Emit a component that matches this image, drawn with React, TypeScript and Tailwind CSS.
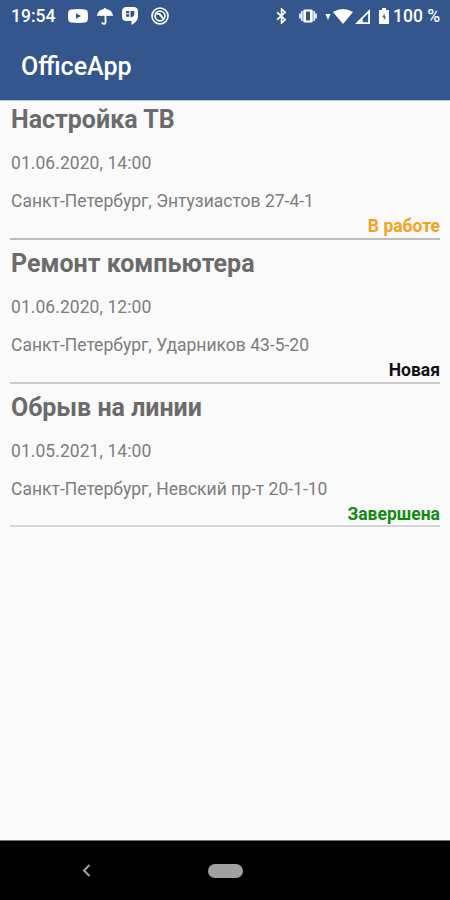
type Task = {
  title: string;
  date: string;
  address: string;
  status: string;
  statusClass: string;
  lineClass: string;
};

const tasks: Task[] = [
  {
    title: "Настройка ТВ",
    date: "01.06.2020, 14:00",
    address: "Санкт-Петербург, Энтузиастов 27-4-1",
    status: "В работе",
    statusClass: "text-[#f5a11a]",
    lineClass: "border-[#bdbdbd]",
  },
  {
    title: "Ремонт компьютера",
    date: "01.06.2020, 12:00",
    address: "Санкт-Петербург, Ударников 43-5-20",
    status: "Новая",
    statusClass: "text-[#111111]",
    lineClass: "border-[#cacaca]",
  },
  {
    title: "Обрыв на линии",
    date: "01.05.2021, 14:00",
    address: "Санкт-Петербург, Невский пр-т 20-1-10",
    status: "Завершена",
    statusClass: "text-[#138a13]",
    lineClass: "border-[#d6d6d6]",
  },
];

function StatusBar() {
  return (
    <div className="flex h-8 items-center pl-[11px] pr-[10px] text-[17.500px] leading-8 font-medium">
      <span className="w-[57px] whitespace-nowrap">19:54</span>
      <svg className="h-[14px] w-5" viewBox="0 0 20 14">
        <path fill="currentColor" fillRule="evenodd" d="M3 .4Q10-.3 17 .4 19.6.6 19.7 3q.5 4 0 8-.2 2.300-2.700 2.600-7 .7-14 0Q.5 13.400.3 11q-.5-4 0-8Q.5.6 3 .4ZM8 4.200v5.600L13 7Z" />
      </svg>
      <svg className="ml-[9px] h-[17px] w-4" viewBox="0 0 16 17">
        <path fill="currentColor" d="M0 8C.3 3.900 3.300 1.400 7.200 1V0h1.600v1c3.900.4 6.900 2.900 7.200 7-2-.5-3.300-.5-4.700 0-.7-.1-1.400-.2-1.900-.2v6.400c0 3.400-5.100 3.400-5.100.1h1.800c0 1.100 1.500 1.100 1.500-.1V7.800c-1 0-1.800 0-2.900.2C3.300 7.500 2 7.500 0 8Z" />
      </svg>
      <svg className="ml-[9px] h-[18px] w-4" viewBox="0 0 16 18">
        <path fill="currentColor" fillRule="evenodd" d="M4.500 0h7Q16 0 16 4.500v4.500q0 5.500-6.500 9v-4H4.500Q0 14 0 9.500v-5Q0 0 4.500 0ZM4 4v5.800h3.200V4Zm4.500 0v6.200c3 0 3.800-1.500 3.800-3.400V4Z" />
        <path stroke="currentColor" strokeWidth="1" d="M4 6.800h3.200" />
      </svg>
      <svg className="ml-[13px] h-[18px] w-[18px]" viewBox="0 0 18 18" fill="none" stroke="currentColor">
        <circle cx="9" cy="9" r="8" strokeWidth="1.600" />
        <circle cx="9" cy="9" r="4.900" strokeWidth="1.700" />
        <path strokeWidth="2" d="m5.500 6.800 3 .2 4 5" />
      </svg>

      <div className="ml-auto flex items-center">
        <svg className="h-[16px] w-[11px]" viewBox="0 0 11 16" fill="none" stroke="currentColor" strokeWidth="1.700">
          <path d="m1.200 4.300 7.900 7.400L5.600 15V1l3.500 3.300-7.900 7.400" />
        </svg>
        <svg className="ml-[12px] h-[14px] w-[18px]" viewBox="0 0 18 14">
          <path fill="currentColor" fillRule="evenodd" d="M5.500.5h7q1.200 0 1.200 1.200v10.600q0 1.200-1.200 1.200h-7q-1.200 0-1.200-1.200V1.700Q4.300.5 5.500.5ZM7 2.500v9h4v-9Z" />
          <path fill="currentColor" d="M3.800 2v10H2V9.500H0v-5h2V2ZM14.200 2v10H16V9.500h2v-5h-2V2Z" opacity=".85" />
        </svg>
        <svg className="mt-[2px] ml-[8px] h-[6px] w-[6px]" viewBox="0 0 6 6">
          <path fill="currentColor" d="M.5 0h5L3 6Z" />
        </svg>
        <svg className="ml-[2px] h-[15px] w-5" viewBox="0 0 20 15">
          <path fill="currentColor" d="M0 3q10-6 20 0L10 15Z" />
        </svg>
        <svg className="ml-[2px] h-[15px] w-[15px]" viewBox="0 0 15 15">
          <path fill="currentColor" fillRule="evenodd" d="M15 0v15H0ZM13.200 4.300 7.700 9.800v3.500h5.500Z" />
        </svg>
        <svg className="ml-[9px] h-[16px] w-[10px]" viewBox="0 0 10 16">
          <path fill="currentColor" fillRule="evenodd" d="M3 0h4v2h3v14H0V2h3ZM5.600 5.500 3.300 9.300h1.500v3L7 8.400H5.600Z" />
        </svg>
        <span className="ml-[4px] w-[47px] whitespace-nowrap">100 %</span>
      </div>
    </div>
  );
}

function TaskRow({ task }: { task: Task }) {
  return (
    <li className={`h-[143.800px] border-b-2 ${task.lineClass}`}>
      <h2 className="pt-[9px] pl-px text-[25px] leading-[30px] font-bold whitespace-nowrap text-[#6b6b6b]">{task.title}</h2>
      <p className="mt-[18px] pl-px text-[17.500px] leading-5 tracking-[0.06px] whitespace-nowrap text-[#7d7d7d]">{task.date}</p>
      <p className="mt-[18px] pl-px text-[17.500px] leading-5 whitespace-nowrap text-[#7d7d7d]">{task.address}</p>
      <p className={`mt-[5px] text-right text-[17.500px] leading-5 font-bold ${task.statusClass}`}>{task.status}</p>
    </li>
  );
}

export default function App() {
  return (
    <div className="flex h-[900px] w-[450px] flex-col overflow-hidden bg-[#fafafa] font-['Roboto','Liberation_Sans',sans-serif]">
      <header className="h-[100px] shrink-0 bg-[#33568d] text-white">
        <StatusBar />
        <h1 className="mt-[19px] pl-[21px] text-[25px] leading-8 font-medium">OfficeApp</h1>
      </header>
      <main className="flex-1 border-t border-[#b9c4d6] px-[10px]">
        <ul className="-mt-[5px]">
          {tasks.map((task) => (
            <TaskRow key={task.title} task={task} />
          ))}
        </ul>
      </main>
      <nav className="flex h-[60px] shrink-0 items-center border-t border-[#777777] bg-black pl-[82px]">
        <svg className="h-[13px] w-[9px]" viewBox="0 0 9 13" fill="none" stroke="#a3a3a3" strokeWidth="2">
          <path d="M7.500 1 2 6.500 7.500 12" />
        </svg>
        <span className="ml-[117px] h-[14px] w-[35px] rounded-full bg-[#a0a0a0]" />
      </nav>
    </div>
  );
}
